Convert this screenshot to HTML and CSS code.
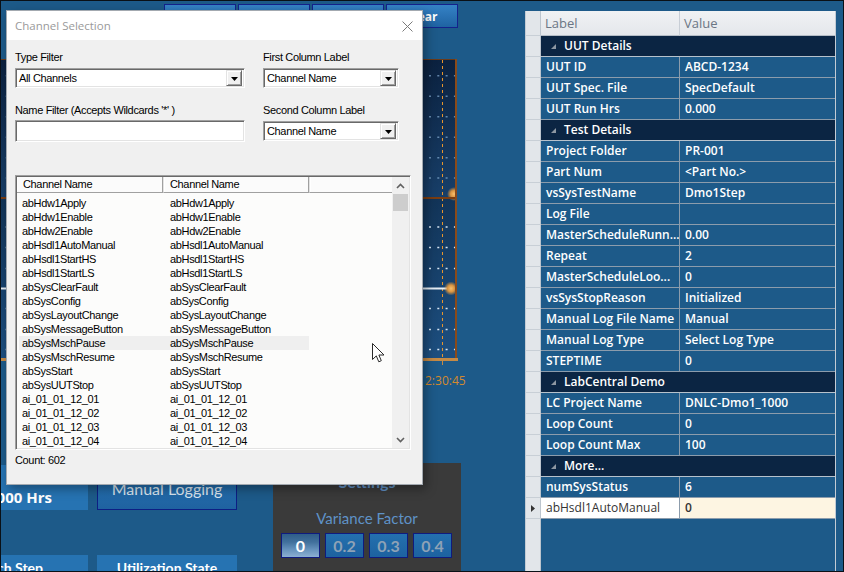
FILE: index.html
```html
<!DOCTYPE html>
<html>
<head>
<meta charset="utf-8">
<title>Channel Selection</title>
<link rel="stylesheet" href="styles.css">
</head>
<body>
<div class="screen">
  <div class="app">
    <section class="left">
      <div class="topbar">
        <div class="tbtn">Start</div>
        <div class="tbtn">Stop</div>
        <div class="tbtn">Pause</div>
        <div class="tbtn">Clear</div>
      </div>
      <div class="chart">
        <svg width="456" height="299" viewBox="0 0 456 299">
          <defs>
            <linearGradient id="g1" x1="0" y1="0" x2="0" y2="1">
              <stop offset="0" stop-color="#0b213f"/>
              <stop offset="1" stop-color="#183f69"/>
            </linearGradient>
            <linearGradient id="g2" x1="0" y1="0" x2="0" y2="1">
              <stop offset="0" stop-color="#123458"/>
              <stop offset="1" stop-color="#1d4f80"/>
            </linearGradient>
            <radialGradient id="glow">
              <stop offset="0" stop-color="#f7c070"/>
              <stop offset="0.5" stop-color="#d99440"/>
              <stop offset="1" stop-color="#d99440" stop-opacity="0"/>
            </radialGradient>
          </defs>
          <rect x="0" y="0" width="456" height="138" fill="url(#g1)"/>
          <rect x="0" y="140" width="456" height="159" fill="url(#g2)"/>
          <g stroke="#7fa6cc" stroke-width="1.5" stroke-dasharray="2 6.3" opacity="0.75">
            <path d="M4.7 16.7H454M4.7 37.3H454M4.7 57.7H454M4.7 78.2H454M4.7 98.7H454M4.7 119H454"/>
          </g>
          <g stroke="#d6e4f2" stroke-width="1.5" stroke-dasharray="2 6.3">
            <path d="M4.7 168H454M4.7 188.5H454M4.7 209.5H454M4.7 249.5H454M4.7 270.5H454M4.7 290.5H454"/>
          </g>
          <line x1="441.5" y1="1" x2="441.5" y2="299" stroke="#e8952c" stroke-width="1" stroke-dasharray="3 3"/>
          <line x1="0" y1="229.5" x2="448" y2="229.5" stroke="#e6edf4" stroke-width="2"/>
          <circle cx="453" cy="135" r="7" fill="url(#glow)"/>
          <circle cx="450" cy="229.5" r="7" fill="url(#glow)"/>
          <rect x="0" y="138" width="456" height="2" fill="#7a3d12"/>
          <rect x="0" y="0" width="456" height="1" fill="#6b3a18"/>
          <rect x="454" y="0" width="2" height="299" fill="#8a4a1a"/>
        </svg>
      </div>
      <div class="axis"></div>
      <div class="tick"></div>
      <div class="times">2:30:45</div>
      <div class="tiles">
        <div class="tcol tcol-a">
          <div class="tile big"><span class="hrs">0.000 Hrs</span></div>
          <div class="tile small"><span class="step">Launch Step</span></div>
        </div>
        <div class="tcol tcol-b">
          <div class="tile big mlog">Manual Logging</div>
          <div class="tile small center">Utilization State</div>
        </div>
        <div class="settings">
          <div class="settings-title">Settings</div>
          <div class="vf">Variance Factor</div>
          <div class="vf-btns">
            <div class="vbtn on">0</div>
            <div class="vbtn">0.2</div>
            <div class="vbtn">0.3</div>
            <div class="vbtn">0.4</div>
          </div>
        </div>
      </div>
    </section>

    <section class="pgrid">
      <div class="pg-head"><div class="rh"></div><div class="hc">Label</div><div class="hc last">Value</div></div>
      <div class="pg-group"><div class="rh"></div><div class="gc"><svg class="tri" width="5" height="5" viewBox="0 0 5 5"><polygon points="5,0 5,5 0,5" fill="#8d97a2"/></svg>UUT Details</div></div>
      <div class="pg-row"><div class="rh"></div><div class="c">UUT ID</div><div class="c v">ABCD-1234</div></div>
      <div class="pg-row"><div class="rh"></div><div class="c">UUT Spec. File</div><div class="c v">SpecDefault</div></div>
      <div class="pg-row"><div class="rh"></div><div class="c">UUT Run Hrs</div><div class="c v">0.000</div></div>
      <div class="pg-group"><div class="rh"></div><div class="gc"><svg class="tri" width="5" height="5" viewBox="0 0 5 5"><polygon points="5,0 5,5 0,5" fill="#8d97a2"/></svg>Test Details</div></div>
      <div class="pg-row"><div class="rh"></div><div class="c">Project Folder</div><div class="c v">PR-001</div></div>
      <div class="pg-row"><div class="rh"></div><div class="c">Part Num</div><div class="c v">&lt;Part No.&gt;</div></div>
      <div class="pg-row"><div class="rh"></div><div class="c">vsSysTestName</div><div class="c v">Dmo1Step</div></div>
      <div class="pg-row"><div class="rh"></div><div class="c">Log File</div><div class="c v"></div></div>
      <div class="pg-row"><div class="rh"></div><div class="c">MasterScheduleRunn...</div><div class="c v">0.00</div></div>
      <div class="pg-row"><div class="rh"></div><div class="c">Repeat</div><div class="c v">2</div></div>
      <div class="pg-row"><div class="rh"></div><div class="c">MasterScheduleLoo...</div><div class="c v">0</div></div>
      <div class="pg-row"><div class="rh"></div><div class="c">vsSysStopReason</div><div class="c v">Initialized</div></div>
      <div class="pg-row"><div class="rh"></div><div class="c">Manual Log File Name</div><div class="c v">Manual</div></div>
      <div class="pg-row"><div class="rh"></div><div class="c">Manual Log Type</div><div class="c v">Select Log Type</div></div>
      <div class="pg-row"><div class="rh"></div><div class="c">STEPTIME</div><div class="c v">0</div></div>
      <div class="pg-group"><div class="rh"></div><div class="gc"><svg class="tri" width="5" height="5" viewBox="0 0 5 5"><polygon points="5,0 5,5 0,5" fill="#8d97a2"/></svg>LabCentral Demo</div></div>
      <div class="pg-row"><div class="rh"></div><div class="c">LC Project Name</div><div class="c v">DNLC-Dmo1_1000</div></div>
      <div class="pg-row"><div class="rh"></div><div class="c">Loop Count</div><div class="c v">0</div></div>
      <div class="pg-row"><div class="rh"></div><div class="c">Loop Count Max</div><div class="c v">100</div></div>
      <div class="pg-group"><div class="rh"></div><div class="gc"><svg class="tri" width="5" height="5" viewBox="0 0 5 5"><polygon points="5,0 5,5 0,5" fill="#8d97a2"/></svg>More...</div></div>
      <div class="pg-row"><div class="rh"></div><div class="c">numSysStatus</div><div class="c v">6</div></div>
      <div class="pg-row sel"><div class="rh"><svg width="4" height="7" viewBox="0 0 4 7"><polygon points="0,0 4,3.5 0,7" fill="#333"/></svg></div><div class="c">abHsdl1AutoManual</div><div class="c v">0</div></div>
      <div class="pg-rest"><div class="rh"></div><div></div></div>
    </section>
  </div>

  <div class="dialog">
    <div class="dlg-title">
      <span>Channel Selection</span>
      <svg class="close" width="11" height="11" viewBox="0 0 11 11"><path d="M0.5 0.5L10.5 10.5M10.5 0.5L0.5 10.5" stroke="#7a7a7a" stroke-width="1"/></svg>
    </div>
    <div class="dlg-body">
      <div class="fields">
        <div class="field">
          <div class="lbl">Type Filter</div>
          <div class="combo"><span class="ctext first">All Channels</span><span class="ddbtn"><svg width="7" height="4" viewBox="0 0 7 4"><polygon points="0,0 7,0 3.5,4" fill="#000"/></svg></span></div>
        </div>
        <div class="field">
          <div class="lbl">First Column Label</div>
          <div class="combo"><span class="ctext">Channel Name</span><span class="ddbtn"><svg width="7" height="4" viewBox="0 0 7 4"><polygon points="0,0 7,0 3.5,4" fill="#000"/></svg></span></div>
        </div>
        <div class="field">
          <div class="lbl">Name Filter (Accepts Wildcards '*' )</div>
          <div class="textbox"></div>
        </div>
        <div class="field">
          <div class="lbl">Second Column Label</div>
          <div class="combo"><span class="ctext">Channel Name</span><span class="ddbtn"><svg width="7" height="4" viewBox="0 0 7 4"><polygon points="0,0 7,0 3.5,4" fill="#000"/></svg></span></div>
        </div>
      </div>

      <div class="listview">
        <div class="lv-main">
          <div class="lv-head"><div class="hcell">Channel Name</div><div class="hcell">Channel Name</div><div class="hcell fill"></div></div>
          <div class="lv-rows">
            <div class="lrow"><span>abHdw1Apply</span><span>abHdw1Apply</span></div>
            <div class="lrow"><span>abHdw1Enable</span><span>abHdw1Enable</span></div>
            <div class="lrow"><span>abHdw2Enable</span><span>abHdw2Enable</span></div>
            <div class="lrow"><span>abHsdl1AutoManual</span><span>abHsdl1AutoManual</span></div>
            <div class="lrow"><span>abHsdl1StartHS</span><span>abHsdl1StartHS</span></div>
            <div class="lrow"><span>abHsdl1StartLS</span><span>abHsdl1StartLS</span></div>
            <div class="lrow"><span>abSysClearFault</span><span>abSysClearFault</span></div>
            <div class="lrow"><span>abSysConfig</span><span>abSysConfig</span></div>
            <div class="lrow"><span>abSysLayoutChange</span><span>abSysLayoutChange</span></div>
            <div class="lrow"><span>abSysMessageButton</span><span>abSysMessageButton</span></div>
            <div class="lrow hot"><span>abSysMschPause</span><span>abSysMschPause</span></div>
            <div class="lrow"><span>abSysMschResume</span><span>abSysMschResume</span></div>
            <div class="lrow"><span>abSysStart</span><span>abSysStart</span></div>
            <div class="lrow"><span>abSysUUTStop</span><span>abSysUUTStop</span></div>
            <div class="lrow"><span>ai_01_01_12_01</span><span>ai_01_01_12_01</span></div>
            <div class="lrow"><span>ai_01_01_12_02</span><span>ai_01_01_12_02</span></div>
            <div class="lrow"><span>ai_01_01_12_03</span><span>ai_01_01_12_03</span></div>
            <div class="lrow"><span>ai_01_01_12_04</span><span>ai_01_01_12_04</span></div>
          </div>
        </div>
        <div class="vscroll">
          <div class="sarrow"><svg width="9" height="6" viewBox="0 0 9 6"><path d="M1 5L4.5 1.5L8 5" fill="none" stroke="#606060" stroke-width="1.6"/></svg></div>
          <div class="thumb"></div>
          <div class="track"></div>
          <div class="sarrow"><svg width="9" height="6" viewBox="0 0 9 6"><path d="M1 1L4.5 4.5L8 1" fill="none" stroke="#606060" stroke-width="1.6"/></svg></div>
        </div>
      </div>
      <div class="count">Count: 602</div>
    </div>
  </div>

  <svg class="cursor" width="13" height="20" viewBox="0 0 13 20">
    <path d="M0.5 0.5V16.5L4.3 12.9L6.8 18.8L9.3 17.7L6.9 12H12Z" fill="#fff" stroke="#2a2a2a" stroke-width="1" stroke-linejoin="round"/>
  </svg>
</div>
</body>
</html>
```

FILE: styles.css
```css
* { box-sizing: border-box; }
html, body { margin: 0; padding: 0; }
body {
  width: 844px;
  height: 572px;
  overflow: hidden;
  background: #0a1016;
  font-family: "Liberation Sans", Arial, sans-serif;
}
.screen {
  position: relative;
  width: 844px;
  height: 572px;
  border: 1px solid #0a1016;
  background: #1d5a89;
  overflow: hidden;
}
.app {
  display: grid;
  grid-template-columns: 524px 311px;
  height: 100%;
}

/* ---------- background app, left part ---------- */
.left {
  display: flex;
  flex-direction: column;
  min-width: 0;
}
.topbar {
  display: flex;
  gap: 2px;
  padding: 3px 0 0 163px;
  height: 27px;
}
.tbtn {
  width: 72px;
  height: 24px;
  border: 1px solid #14228c;
  background: linear-gradient(#3582c6, #1f63a2);
  color: #fff;
  font: 700 12px "Open Sans", sans-serif;
  display: flex;
  align-items: center;
  justify-content: center;
}
.chart {
  margin-top: 31px;
  width: 456px;
  height: 299px;
}
.chart svg { display: block; }
.axis {
  width: 457px;
  height: 3px;
  background: #c58a45;
}
.tick {
  margin-left: 441px;
  width: 1px;
  height: 4px;
  background: #c58a45;
}
.times {
  margin-top: 8px;
  padding-left: 424px;
  font: 12px/16px "Open Sans", sans-serif;
  color: #d48a2e;
  white-space: nowrap;
}
.tiles {
  display: flex;
  margin-top: 74px;
  flex: 1;
  min-height: 0;
}
.tcol {
  display: flex;
  flex-direction: column;
  gap: 45px;
  padding-top: 2px;
}
.tcol-a { width: 140px; margin-left: -53px; }
.tcol-b { width: 140px; margin-left: 9px; }
.tile {
  background: #2673b2;
  color: #fff;
  font-family: Lato, "Open Sans", sans-serif;
}
.tile.big {
  height: 45px;
  display: flex;
  align-items: flex-end;
  justify-content: flex-end;
}
.tile.small {
  flex: 1;
  font-weight: 700;
  font-size: 14px;
  line-height: 20px;
  padding-top: 3px;
  text-align: right;
}
.tile.small.center { text-align: center; }
.hrs {
  font: 700 15px/20px "Open Sans", sans-serif;
  padding: 0 36px 3px 0;
}
.step { padding-right: 45px; }
.tile.mlog {
  border: 1px solid #0d1f84;
  background: linear-gradient(#2676b7, #1f62a0);
  color: #dbe6f1;
  font-size: 16px;
  align-items: center;
  justify-content: center;
  padding-top: 1px;
}
.settings {
  width: 188px;
  margin-left: 36px;
  background: #3a3a3a;
  padding: 9px 0 0 8px;
  font-family: Lato, "Open Sans", sans-serif;
}
.settings-title {
  text-align: center;
  padding-right: 8px;
  font: 700 16px/20px Lato, sans-serif;
  color: #5f8fc3;
}
.vf {
  margin-top: 16px;
  text-align: center;
  padding-right: 8px;
  font-size: 15px;
  line-height: 20px;
  color: #5f92c7;
}
.vf-btns {
  display: flex;
  gap: 5px;
  margin-top: 5px;
}
.vbtn {
  width: 39px;
  height: 25px;
  border: 1px solid #0f1b7e;
  background: linear-gradient(#2470ae, #1d62a0);
  color: #8ea2b6;
  font-weight: 700;
  font-size: 16px;
  display: flex;
  align-items: center;
  justify-content: center;
}
.vbtn.on {
  background: linear-gradient(#2f5d88 0%, #41709c 35%, #6390ba 65%, #8cb0d2 100%);
  color: #fff;
}

/* ---------- property grid ---------- */
.pgrid {
  margin-top: 10px;
  display: flex;
  flex-direction: column;
  border-left: 1px solid #c3cbd4;
  border-right: 1px solid #c3cbd4;
  font: 600 12px "Open Sans", sans-serif;
  color: #fff;
  min-height: 0;
}
.pg-head, .pg-row, .pg-group, .pg-rest {
  display: grid;
  grid-template-columns: 15px 139px 155px;
  height: 21px;
}
.pg-head { height: 25px; }
.pg-group { grid-template-columns: 15px 294px; }
.pg-rest { grid-template-columns: 15px 294px; flex: 1; height: auto; }
.rh {
  background: #e2e6ea;
  border-bottom: 1px solid #c8cfd6;
  border-right: 1px solid #bcc5ce;
  display: flex;
  align-items: center;
  justify-content: center;
}
.pg-rest .rh { border-bottom: 0; }
.hc {
  background: linear-gradient(#f0f2f4, #e4e7eb);
  border-bottom: 1px solid #b4bcc5;
  border-right: 1px solid #c8ced6;
  color: #6b7684;
  font-weight: 400;
  font-size: 13px;
  line-height: 24px;
  padding-left: 4px;
}
.hc.last { border-right: 0; }
.gc {
  background: #0b2543;
  border-bottom: 1px solid #b7c2cc;
  display: flex;
  align-items: center;
  padding-left: 10px;
  gap: 8px;
  line-height: 20px;
}
.tri { margin-top: 1px; }
.c {
  border-bottom: 1px solid #8c9cac;
  border-right: 1px solid #8c9cac;
  padding-left: 5px;
  line-height: 20px;
  white-space: nowrap;
  overflow: hidden;
}
.c.v { border-right: 0; }
.pg-row.sel .c { background: #fff; color: #333; font-weight: 400; }
.pg-row.sel .c.v { background: #fdf5e2; font-weight: 600; }

/* ---------- dialog ---------- */
.dialog {
  position: absolute;
  left: 5px;
  top: 9px;
  width: 417px;
  height: 475px;
  border: 1px solid #a3a9b0;
  background: #f0f0f0;
  box-shadow: 3px 4px 10px rgba(0, 0, 0, 0.35);
  display: flex;
  flex-direction: column;
  font: 11px/13px "Liberation Sans", Arial, sans-serif;
  letter-spacing: -0.35px;
  color: #000;
}
.dlg-title {
  height: 29px;
  flex: none;
  background: #fff;
  display: flex;
  align-items: center;
  justify-content: space-between;
  padding: 0 9px 0 8px;
  font: 11.5px "Open Sans", sans-serif;
  letter-spacing: 0;
  color: #9a9a9a;
}
.close { margin-top: 1px; }
.dlg-body {
  flex: 1;
  padding: 10px 8px 0 8px;
}
.fields {
  display: grid;
  grid-template-columns: 230px 136px;
  column-gap: 18px;
  row-gap: 15px;
}
.lbl { height: 13px; margin-bottom: 5px; padding-top: 1px; white-space: nowrap; }
.combo, .textbox {
  height: 20px;
  background: #fff;
  border: 1px solid;
  border-color: #a0a0a0 #fff #fff #a0a0a0;
  box-shadow: inset 1px 1px 0 #696969, inset -1px -1px 0 #e3e3e3;
  display: flex;
  align-items: center;
  padding: 1px 2px 1px 2px;
}
.textbox { height: 22px; margin-top: -1px; }
.ctext { flex: 1; padding-left: 1px; line-height: 13px; padding-top: 1px; }
.ctext.first { padding-top: 0; }
.ddbtn {
  width: 16px;
  height: 16px;
  background: #f0f0f0;
  border: 1px solid;
  border-color: #e3e3e3 #696969 #696969 #e3e3e3;
  box-shadow: inset 1px 1px 0 #fff, inset -1px -1px 0 #a0a0a0;
  display: flex;
  align-items: center;
  justify-content: center;
}
.ddbtn svg { display: block; margin-top: 1px; }
.listview {
  margin-top: 33px;
  width: 396px;
  height: 275px;
  border: 1px solid;
  border-color: #a0a0a0 #fff #fff #a0a0a0;
  box-shadow: inset 1px 1px 0 #696969, inset -1px -1px 0 #e3e3e3;
  background: #fcfcfb;
  padding: 1px;
  display: flex;
}
.lv-main { flex: 1; min-width: 0; }
.lv-head {
  display: grid;
  grid-template-columns: 146px 146px 1fr;
  height: 16px;
}
.hcell {
  background: #fbfbfb;
  border-right: 1px solid #a0a0a0;
  border-bottom: 1px solid #a0a0a0;
  box-shadow: inset 1px 0 0 #fff;
  padding-left: 6px;
  line-height: 15px;
  white-space: nowrap;
}
.hcell + .hcell { border-left: 1px solid #e3e3e3; }
.hcell.fill { border-right: 0; }
.lv-rows { padding: 3px 0 0 2px; }
.lrow {
  display: grid;
  grid-template-columns: 145px 145px;
  width: 290px;
  height: 14px;
  line-height: 14px;
  white-space: nowrap;
}
.lrow span:first-child { padding-left: 3px; }
.lrow span:last-child { padding-left: 6px; }
.lrow.hot { background: #efefef; }
.vscroll {
  width: 17px;
  flex: none;
  background: #f0f0f0;
  display: flex;
  flex-direction: column;
}
.sarrow {
  height: 17px;
  display: flex;
  align-items: center;
  justify-content: center;
}
.sarrow svg { display: block; }
.thumb {
  height: 17px;
  margin: 0 1px;
  background: #cdcdcd;
}
.track { flex: 1; }
.count {
  margin-top: 4px;
  line-height: 13px;
}

.cursor {
  position: absolute;
  left: 371px;
  top: 342px;
}
```
